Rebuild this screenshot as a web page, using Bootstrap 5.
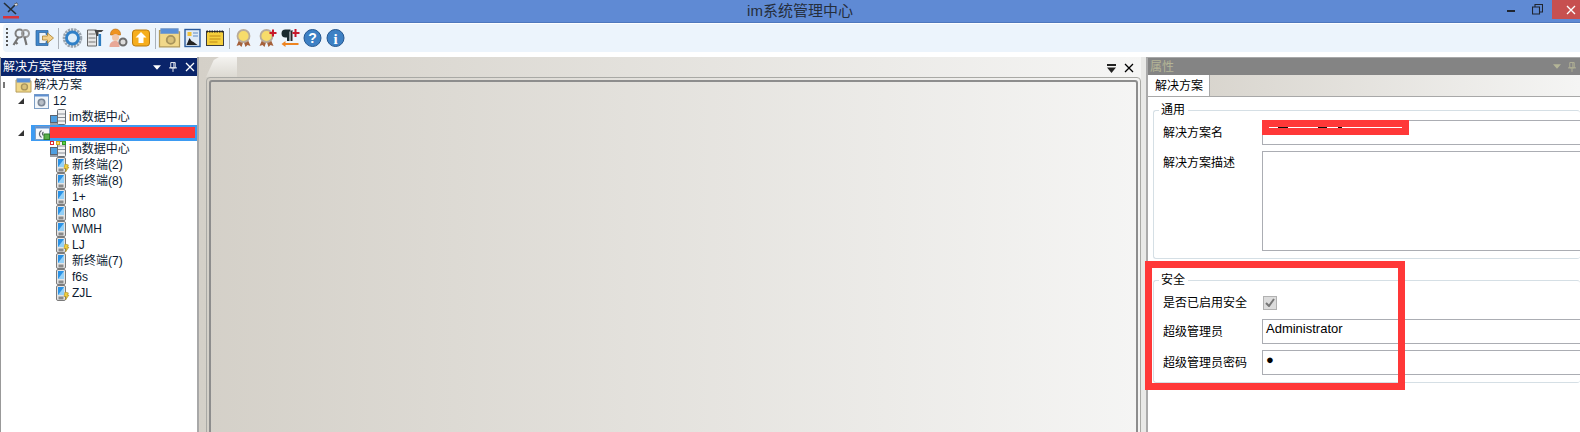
<!DOCTYPE html>
<html lang="en">

<head>
    <meta charset="UTF-8">
    <title>im系统管理中心</title>
    <link href="https://cdn.jsdelivr.net/npm/bootstrap@5.3.0/dist/css/bootstrap.min.css" rel="stylesheet">
    <style>
        html, body { height: 432px; overflow: hidden; }
        body { font-family: "Liberation Sans", "Noto Sans CJK SC", sans-serif; font-size: 12px; line-height: 16px; color: #000; background: #fff; }

        .title-bar { height: 23px; padding-left: 20px; background: #5f8ad4; border-bottom: 1px solid #4f78bd; color: #252e3c; font-size: 15px; }
        .title-logo { left: 2px; top: 2px; }
        .win-ctrl { right: 0; top: 0; }
        .win-min { margin: 10px 17px 0 0; }
        .win-max { margin: 4px 9px 0 0; }
        .win-close { width: 28px; height: 19px; background: #c75050; color: #fff; }

        .tool-strip { height: 34px; padding: 1px 0 5px 3px; }
        .tool-inner { height: 28px; background: #ecf4fc; border-radius: 4px 0 0 4px; padding-left: 3px; }
        .grip { width: 2px; height: 20px; margin-right: 1.5px; background: repeating-linear-gradient(#555 0 2px, transparent 2px 4px); }
        .tool-sep { width: 1px; height: 21px; background: #a9b0b8; margin: 0 2px; }
        .tool-btn { width: 23px; height: 20px; }

        .work-area { height: 375px; overflow: hidden; }

        .tree-pane { width: 199px; border-left: 1px solid #999; border-right: 2px solid #a8a8a8; }
        .pane-head { height: 18px; padding: 0 4px 0 2px; }
        .head-navy { background: #0a246a; color: #fff; margin-top: 1px; padding-right: 2px; }
        .tree-list { padding-top: 1px; }
        .tree-item { height: 16px; white-space: nowrap; }
        .tree-grip { width: 2px; height: 6px; background: #777; margin-left: 2px; }
        .tree-arrow { width: 0; height: 0; margin-left: 17px; border-style: solid; border-width: 0 0 6px 6px; border-color: transparent transparent #333 transparent; }
        .tree-text { color: #0b1a30; }
        .root-icon { width: 17px; height: 15px; margin-left: 10px; }
        .root-text { margin-left: 2px; }
        .sol-icon { width: 15px; height: 15px; margin-left: 10px; }
        .sol-text { margin-left: 4px; }
        .data-icon { width: 16px; height: 16px; margin-left: 49px; }
        .data-text { margin-left: 3px; }
        .term-icon { width: 16px; height: 16px; margin-left: 53px; }
        .term-text { margin-left: 2px; }
        .tree-sel { height: 16px; width: 167px; margin-left: 7px; padding-left: 4px; background: #3d9bf2; }
        .sel-icon { width: 15px; height: 14px; }

        .doc-pane { width: 942px; padding-left: 7px; background: linear-gradient(90deg, #d4d0c8, #f5f5f4); overflow: hidden; }
        .doc-tabs { height: 20px; }
        .doc-tab { width: 31px; height: 20px; background: linear-gradient(#f4f3f0, #dcd9d2); clip-path: polygon(0 100%, 25% 15%, 42% 0, 100% 0, 100% 100%); }
        .doc-frame { height: 370px; padding: 2px; border: 1px solid #a9a9a5; border-radius: 4px 4px 0 0; }
        .doc-inner { height: 100%; border: 2px solid #8d8d8d; border-radius: 3px 3px 0 0; }
        .doc-btns { right: 7px; top: 6px; }

        .gap-pane { width: 7px; background: linear-gradient(90deg, #e9e9e7 0 5px, #aaa 5px); }

        .prop-pane { background: #fff; }
        .head-gray { background: #848484; color: #b4b597; border-top: 1px solid #a8a8a8; padding-left: 2px; }
        .prop-icons { gap: 7px; color: #b4b597; }
        .prop-tabs { height: 22px; background: linear-gradient(90deg, #d4d0c8, #f5f5f4); border-bottom: 1px solid #a8a8a8; }
        .prop-tab { width: 62px; height: 21px; margin-left: 0; padding: 3px 0 0 7px; background: #fff; border-right: 1px solid #a8a8a8; }

        .group-box { position: relative; margin-left: 5px; border: 1px solid #d5dfe5; border-right: 0; border-radius: 3px; }
        .group-title { left: 5px; top: -9px; padding: 0 3px 0 2px; background: #fff; }
        .group-main { margin-top: 13px; height: 149px; padding-top: 9px; }
        .group-safe { margin-top: 21px; height: 103px; padding-top: 14px; }
        .prop-row { display: flex; }
        .prop-label { width: 99px; margin-left: 9px; flex-shrink: 0; }
        .prop-box { flex: 1; padding: 1px 3px; border: 1px solid #abadb3; border-right: 0; font-size: 13px; }
        .h-one { height: 25px; }
        .h-desc { height: 100px; margin-top: 6px; }
        .h-check { height: 15px; }
        .row-admin { margin-top: 9px; }
        .row-pass { margin-top: 6px; }
        .safe-check { width: 14px; height: 14px; background: #dcdcdc; border: 1px solid #b1b1b1; margin-left: 1px; }

        .mark-box { left: 1145px; top: 261px; width: 260px; height: 129px; border: 7px solid #ff3838; }
        .mark-tree { left: 50px; top: 127px; width: 145px; height: 11px; background: #ff3838; }
        .mark-name { left: 1262px; top: 120px; width: 147px; height: 15px; background: #ff3838; }
        .mark-line { left: 7px; top: 7px; width: 133px; height: 1px; background: linear-gradient(90deg, #fff 0 9px, #111 9px 19px, #fff 19px 49px, #111 49px 58px, #fff 58px 69px, #111 69px 73px, #fff 73px); }
    </style>
</head>

<body class="position-relative">
    <!-- icon sprites -->
    <svg width="0" height="0" class="position-absolute">
        <symbol id="ic-folder" viewBox="0 0 18 16"><path d="M1 2h6l1 1h9v12H1z" fill="#f1d88a" stroke="#b39a58"/><rect x="2" y=".5" width="14" height="4" fill="#5a8fd6" stroke="#7d9cc4" stroke-width=".6"/><circle cx="10" cy="9.500" r="3.200" fill="#d8c07a" stroke="#a8945c" stroke-width="1.500"/></symbol>
        <symbol id="ic-sol" viewBox="0 0 15 15"><rect x=".5" y=".5" width="14" height="14" fill="#f1f5f9" stroke="#7e9ec4"/><rect x=".5" y=".5" width="14" height="2" fill="#5f8fd0"/><circle cx="7.500" cy="8.500" r="3.200" fill="#b8bec6" stroke="#7c8796" stroke-width="1.600"/></symbol>
        <symbol id="ic-sol2" viewBox="0 0 15 14"><rect x=".5" y=".5" width="14" height="13" fill="#f6f8fb" stroke="#7e9ec4"/><rect x=".5" y=".5" width="14" height="2" fill="#5f8fd0"/><path d="M6.500 4.500a4 4 0 0 0 0 7M8.500 6a2 2 0 0 0 0 3.500" fill="none" stroke="#5d6670" stroke-width="1.300"/><rect x="9" y="8" width="5.500" height="5.500" fill="#58b04a" stroke="#2f7a2a"/></symbol>
        <symbol id="ic-data" viewBox="0 0 16 16"><rect x=".5" y="6.500" width="8" height="7" fill="#4f9fe0" stroke="#5b6470"/><rect y="14" width="9" height="2" fill="#9aa0a8"/><rect x="7.500" y=".5" width="8" height="15" rx="1" fill="#f1f1f1" stroke="#666c74"/><path d="M8 5h7M8 8.500h7M8 12h7" stroke="#8a8f96"/></symbol>
        <symbol id="ic-data-d" viewBox="0 0 16 16"><use href="#ic-data"/><rect x=".5" y=".5" width="3" height="3" fill="#fff" stroke="#e0282e"/><rect x="6.500" y=".5" width="3" height="3" fill="#f7e06a" stroke="#d7a81e"/><rect x="12.500" y=".5" width="3" height="3" fill="#5fd048" stroke="#2f9a22"/></symbol>
        <symbol id="ic-term" viewBox="0 0 16 16"><rect x="2.500" y=".5" width="9" height="15" rx="1.500" fill="#e4e4e4" stroke="#7b7b7b"/><rect x="4" y="2" width="6" height="8" fill="#2a92e6"/><path d="M4 10l6-8v8z" fill="#93d0f7"/><rect x="4.500" y="11.500" width="5" height="3" fill="#8a8a8a"/></symbol>
        <symbol id="ic-term-b" viewBox="0 0 16 16"><use href="#ic-term"/><path d="M11 7l3.500 1-1.500 2h2l-3.500 5 .8-3.500H10z" fill="#f2cf3a" stroke="#a98b1c" stroke-width=".6"/></symbol>
        <symbol id="ic-keys" viewBox="0 0 20 20"><circle cx="8" cy="5.500" r="4" fill="none" stroke="#7f7f7f" stroke-width="2"/><circle cx="14" cy="5.500" r="3.500" fill="none" stroke="#9a9a9a" stroke-width="2"/><path d="M7 9L2 17M4 14l2 2M13 9l2 8" stroke="#757575" stroke-width="2.200" fill="none"/></symbol>
        <symbol id="ic-exit" viewBox="0 0 20 20"><path d="M1.500 2.500h12v4h-2v-2h-7v11h7v-2h2v4h-12z" fill="#3f87cc" stroke="#2a5f96" stroke-width=".7"/><path d="M8 8h5V5l6 5-6 5v-3H8z" fill="#f4cf87" stroke="#a8802e" stroke-width=".8"/></symbol>
        <symbol id="ic-gear" viewBox="0 0 20 20"><circle cx="10" cy="10" r="8" fill="none" stroke="#9aa4ae" stroke-width="3.600" stroke-dasharray="2.200 .8"/><circle cx="10" cy="10" r="6" fill="#dcecf8" stroke="#2f80c8" stroke-width="2.800"/></symbol>
        <symbol id="ic-tools" viewBox="0 0 20 20"><path d="M2 2h9v16H2z" fill="#e6e6e6" stroke="#666"/><path d="M3 6h7M3 10h7M3 14h7" stroke="#777"/><path d="M9 2h9l-2 2h-3v4h-2z" fill="#444"/><rect x="13" y="6" width="2.600" height="12" fill="#2f7dc0"/></symbol>
        <symbol id="ic-worker" viewBox="0 0 20 20"><path d="M2 6a5 5 0 0 1 10 0v1H2z" fill="#ef9420" stroke="#b46a10" stroke-width=".6"/><circle cx="7" cy="9.500" r="3.500" fill="#f1c6a8"/><path d="M1 19c0-5 3-6 6-6s4 2 4 6z" fill="#e8a898"/><circle cx="14.500" cy="14" r="3.500" fill="#ddd" stroke="#6d6d6d" stroke-width="2"/></symbol>
        <symbol id="ic-up" viewBox="0 0 20 20"><rect x="1" y="2" width="17" height="16" rx="3" fill="#f6ae1e" stroke="#b87a10"/><path d="M9.500 4l5.500 5.500h-3V15H7V9.500H4z" fill="#fff"/></symbol>
        <symbol id="ic-pic" viewBox="0 0 20 20"><rect x="2.500" y="1.500" width="15" height="17" fill="#dfeaf6" stroke="#2b5b9c" stroke-width="1.400"/><rect x="5" y="4" width="4" height="4" fill="#f1c13a"/><path d="M10.500 5h5M10.500 8h5" stroke="#5e8ac0"/><path d="M4 17l3-7 2 3 2 1 4 3z" fill="#222"/></symbol>
        <symbol id="ic-note" viewBox="0 0 20 20"><rect x="1" y="3.500" width="17" height="14" fill="#f5cf3c" stroke="#3c3c3c"/><path d="M1 3.500h17" stroke="#222" stroke-width="2" stroke-dasharray="1.500 1"/><path d="M4 8h11M4 11h11M4 14h8" stroke="#c08a18"/></symbol>
        <symbol id="ic-medal" viewBox="0 0 20 20"><path d="M6 11l-3 7 3-1 2 2 2-6 2 6 2-2 3 1-3-7z" fill="#a5603a"/><circle cx="10" cy="8" r="6" fill="#f7dc6a" stroke="#b8ab9a" stroke-width="1.800"/></symbol>
        <symbol id="ic-medal-p" viewBox="0 0 20 20"><use href="#ic-medal"/><path d="M13 4h2.500V1.500h2V4H20v2h-2.500v2.500h-2V6H13z" fill="#c8182a"/></symbol>
        <symbol id="ic-para" viewBox="0 0 20 20"><path d="M11 1.500H6a3.500 3.500 0 0 0 0 8h1.500V13H10V3.500h1z" fill="#1a2a30"/><path d="M11 3l2-1v11h-2z" fill="#2a2a2a"/><path d="M13 4h2V1h2v3h3v2h-3v3h-2V6h-2z" fill="#c8182a"/><path d="M6 15H19v2H6v2l-4-3 4-3z" fill="#ee8420"/></symbol>
        <symbol id="ic-drop" viewBox="0 0 9 5"><path d="M0 0h9L4.500 5z" fill="currentColor"/></symbol>
        <symbol id="ic-pin" viewBox="0 0 9 11"><path d="M2 .5h5v6H2zM0 6.500h9M4.500 7v4M5.500 1v5" fill="none" stroke="currentColor"/></symbol>
        <symbol id="ic-x" viewBox="0 0 10 10"><path d="M1 1l8 8M9 1l-8 8" stroke="currentColor" stroke-width="1.300"/></symbol>
    </svg>

    <div class="title-bar position-relative d-flex align-items-center justify-content-center">
        <svg class="title-logo position-absolute" width="18" height="18" viewBox="0 0 18 18"><path d="M2 1l12 11M15 1L6 10" stroke="#26303a" stroke-width="1.600"/><path d="M12 2l3-1 1 2-2 1" fill="#ddd" stroke="#444" stroke-width=".5"/><rect x="1" y="14" width="16" height="2.500" fill="#d8333a"/></svg>
        <span>im系统管理中心</span>
        <div class="win-ctrl position-absolute d-flex">
            <svg class="win-min" width="8" height="3" viewBox="0 0 8 3"><rect width="8" height="2" fill="#1f2530"/></svg>
            <svg class="win-max" width="11" height="11" viewBox="0 0 11 11"><path d="M.5 3h7v7h-7zM3 3V.5h7.500V8H8" fill="none" stroke="#1f2530" stroke-width="1.100"/></svg>
            <div class="win-close d-flex align-items-center justify-content-end"><svg width="10" height="10" class="me-1"><use href="#ic-x"/></svg></div>
        </div>
    </div>

    <div class="tool-strip">
        <div class="tool-inner d-flex align-items-center">
            <div class="grip"></div>
            <svg class="tool-btn"><use href="#ic-keys"/></svg>
            <svg class="tool-btn"><use href="#ic-exit"/></svg>
            <div class="tool-sep"></div>
            <svg class="tool-btn"><use href="#ic-gear"/></svg>
            <svg class="tool-btn"><use href="#ic-tools"/></svg>
            <svg class="tool-btn"><use href="#ic-worker"/></svg>
            <svg class="tool-btn"><use href="#ic-up"/></svg>
            <div class="tool-sep"></div>
            <svg class="tool-btn"><use href="#ic-folder"/></svg>
            <svg class="tool-btn"><use href="#ic-pic"/></svg>
            <svg class="tool-btn"><use href="#ic-note"/></svg>
            <div class="tool-sep"></div>
            <svg class="tool-btn"><use href="#ic-medal"/></svg>
            <svg class="tool-btn"><use href="#ic-medal-p"/></svg>
            <svg class="tool-btn"><use href="#ic-para"/></svg>
            <svg class="tool-btn" viewBox="0 0 20 20"><circle cx="10" cy="10" r="8.500" fill="#3d80c4" stroke="#25578f"/><text x="10" y="15" text-anchor="middle" font-size="14" font-weight="700" font-family="Liberation Sans" fill="#fff">?</text></svg>
            <svg class="tool-btn" viewBox="0 0 20 20"><circle cx="10" cy="10" r="8.500" fill="#3d80c4" stroke="#25578f"/><text x="10" y="15.500" text-anchor="middle" font-size="15" font-weight="700" font-family="Liberation Serif" fill="#fff">i</text></svg>
        </div>
    </div>

    <div class="work-area d-flex">
        <div class="tree-pane flex-shrink-0">
            <div class="pane-head head-navy d-flex align-items-center justify-content-between">
                <span>解决方案管理器</span>
                <span class="d-flex align-items-center gap-2">
                    <svg width="8" height="5"><use href="#ic-drop"/></svg>
                    <svg width="8" height="10"><use href="#ic-pin"/></svg>
                    <svg width="10" height="10"><use href="#ic-x"/></svg>
                </span>
            </div>
            <div class="tree-list" id="solutionTree"></div>
        </div>

        <div class="doc-pane flex-shrink-0 position-relative">
            <div class="doc-tabs"><div class="doc-tab"></div></div>
            <div class="doc-frame"><div class="doc-inner"></div></div>
            <span class="doc-btns position-absolute d-flex align-items-center gap-2">
                <svg width="9" height="9" viewBox="0 0 9 9"><rect width="9" height="2" fill="#222"/><path d="M0 3.500h9L4.500 9z" fill="#222"/></svg>
                <svg width="10" height="10"><use href="#ic-x"/></svg>
            </span>
        </div>

        <div class="gap-pane flex-shrink-0"></div>

        <div class="prop-pane flex-grow-1">
            <div class="pane-head head-gray d-flex align-items-center justify-content-between">
                <span>属性</span>
                <span class="prop-icons d-flex align-items-center">
                    <svg width="8" height="5"><use href="#ic-drop"/></svg>
                    <svg width="8" height="10"><use href="#ic-pin"/></svg>
                </span>
            </div>
            <div class="prop-tabs"><div class="prop-tab">解决方案</div></div>

            <div class="group-box group-main">
                <span class="group-title position-absolute">通用</span>
                <div class="prop-row align-items-center h-one"><span class="prop-label">解决方案名</span><div class="prop-box h-one"></div></div>
                <div class="prop-row h-desc"><span class="prop-label pt-1">解决方案描述</span><div class="prop-box"></div></div>
            </div>

            <div class="group-box group-safe">
                <span class="group-title position-absolute">安全</span>
                <div class="prop-row align-items-center h-check"><span class="prop-label">是否已启用安全</span>
                    <div class="safe-check d-flex align-items-center justify-content-center"><svg width="10" height="9" viewBox="0 0 10 9"><path d="M1 5l3 3 5-7" fill="none" stroke="#777" stroke-width="2"/></svg></div>
                </div>
                <div class="prop-row align-items-center h-one row-admin"><span class="prop-label">超级管理员</span><div class="prop-box h-one">Administrator</div></div>
                <div class="prop-row align-items-center h-one row-pass"><span class="prop-label">超级管理员密码</span><div class="prop-box h-one">●</div></div>
            </div>
        </div>
    </div>

    <!-- annotations drawn over the screenshot -->
    <div class="mark-tree position-absolute"></div>
    <div class="mark-name position-absolute"><div class="mark-line position-absolute"></div></div>
    <div class="mark-box position-absolute"></div>

    <script>
        const terminals = [
            { name: '新终端(2)', warn: true },
            { name: '新终端(8)' },
            { name: '1+' },
            { name: 'M80' },
            { name: 'WMH' },
            { name: 'LJ', warn: true },
            { name: '新终端(7)' },
            { name: 'f6s' },
            { name: 'ZJL', warn: true }
        ];

        const row = html => `<div class="tree-item d-flex align-items-center">${html}</div>`;
        const icon = (cls, id) => `<svg class="${cls}"><use href="#${id}"/></svg>`;

        let html = '';
        html += row(`<span class="tree-grip"></span>${icon('root-icon', 'ic-folder')}<span class="tree-text root-text">解决方案</span>`);
        html += row(`<span class="tree-arrow"></span>${icon('sol-icon', 'ic-sol')}<span class="tree-text sol-text">12</span>`);
        html += row(`${icon('data-icon', 'ic-data')}<span class="tree-text data-text">im数据中心</span>`);
        html += row(`<span class="tree-arrow"></span><div class="tree-sel d-flex align-items-center">${icon('sel-icon', 'ic-sol2')}</div>`);
        html += row(`${icon('data-icon', 'ic-data-d')}<span class="tree-text data-text">im数据中心</span>`);
        terminals.forEach(t => {
            html += row(`${icon('term-icon', t.warn ? 'ic-term-b' : 'ic-term')}<span class="tree-text term-text">${t.name}</span>`);
        });
        document.getElementById('solutionTree').innerHTML = html;
    </script>
</body>

</html>
